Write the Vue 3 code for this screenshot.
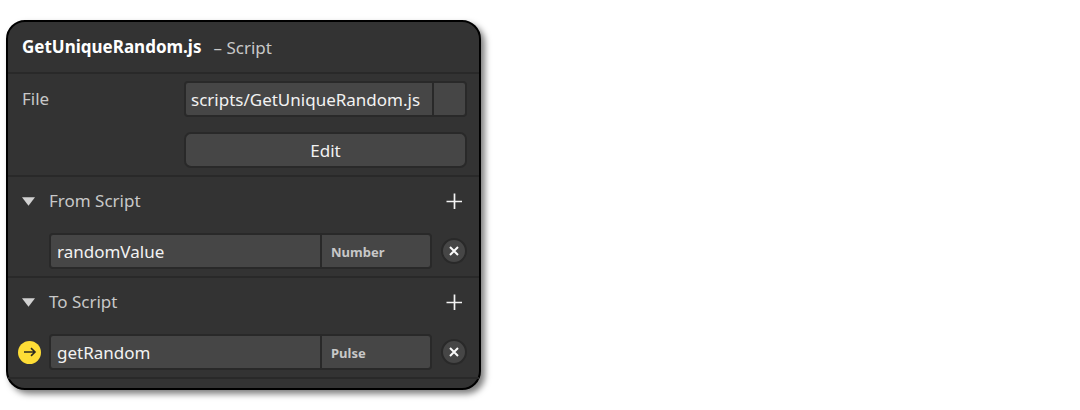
<script setup>
import { reactive, ref } from 'vue'

const file = ref('scripts/GetUniqueRandom.js')
const sections = reactive([
  { id: 'from', title: 'From Script', name: 'randomValue', type: 'Number', pulse: false, open: true },
  { id: 'to', title: 'To Script', name: 'getRandom', type: 'Pulse', pulse: true, open: true },
])
</script>

<template>
  <main class="panel">
    <header class="head">
      <h1 class="title">GetUniqueRandom.js</h1>
      <span class="kind">– Script</span>
    </header>

    <section class="block file-block">
      <label class="label" for="file">File</label>
      <div class="field">
        <input id="file" v-model="file" class="text path" type="text" />
        <button class="browse" type="button" aria-label="Browse"></button>
      </div>
      <button class="edit" type="button">Edit</button>
    </section>

    <section v-for="s in sections" :key="s.id" class="block">
      <div class="bar">
        <button class="toggle" type="button" :aria-expanded="s.open" @click="s.open = !s.open">
          <svg class="arrow" viewBox="0 0 14 9"><path d="M0 0H14L7 9Z" fill="#d2d2d2" /></svg>
          <span>{{ s.title }}</span>
        </button>
        <button class="add" type="button" :aria-label="'Add ' + s.title">
          <svg width="16" height="16" viewBox="0 0 16 16"><path d="M8.5 0.5V16M0.5 8.5H16" stroke="#f4f4f4" stroke-width="1.7" /></svg>
        </button>
      </div>
      <div v-if="s.open" class="row">
        <div class="marker">
          <button v-if="s.pulse" class="pulse" type="button" aria-label="Pulse">
            <svg width="14" height="12" viewBox="0 0 14 12"><path d="M1 6H12M8 2.2L12 6L8 9.8" fill="none" stroke="#2b2a20" stroke-width="1.6" /></svg>
          </button>
        </div>
        <div class="field">
          <input v-model="s.name" class="text" type="text" :aria-label="s.title + ' name'" />
          <button class="type" type="button">{{ s.type }}</button>
        </div>
        <button class="remove" type="button" :aria-label="'Remove ' + s.name">
          <svg width="10" height="10" viewBox="0 0 10 10"><path d="M1 1L9 9M9 1L1 9" stroke="#fafafa" stroke-width="2" /></svg>
        </button>
      </div>
    </section>
  </main>
</template>

<style>
body {
  background: #fff;
}
</style>

<style scoped>
.panel,
.panel * {
  box-sizing: border-box;
}
.panel {
  max-width: 475px;
  margin: 20px 6px;
  padding-bottom: 9px;
  border: 2px solid #000;
  border-radius: 19px;
  background: #333;
  box-shadow: 4px 4px 6px rgba(0, 0, 0, 0.5);
  color: #c8c8c8;
  font: 17px/24px "Noto Sans", "Open Sans", sans-serif;
}
button,
input {
  margin: 0;
  padding: 0;
  border: 0;
  background: none;
  color: inherit;
  font: inherit;
}
svg {
  display: block;
}
.head {
  display: flex;
  align-items: center;
  gap: 12px;
  height: 52px;
  padding: 0 14px;
  border-bottom: 2px solid #292929;
}
.title {
  margin: 0;
  color: #fff;
  font-size: 17px;
  font-weight: 700;
}
.kind {
  padding-top: 2px;
}
.block {
  padding: 0 12px 7px 14px;
  border-bottom: 2px solid #292929;
}
.file-block {
  display: grid;
  grid-template-columns: 162px 1fr;
  row-gap: 15px;
  padding-top: 7px;
}
.label {
  line-height: 36px;
}
.field {
  display: flex;
  flex: 1;
  min-width: 0;
  height: 36px;
  border: 2px solid #292929;
  border-radius: 4px;
  background: #464646;
}
.text {
  flex: 1;
  min-width: 0;
  padding: 2px 6px 0;
  color: #f2f2f2;
}
.path {
  padding: 2px 5px 0;
}
.browse {
  width: 33px;
  border-left: 2px solid #292929;
}
.edit {
  grid-column: 2;
  height: 36px;
  padding-top: 2px;
  border: 2px solid #292929;
  border-radius: 7px;
  background: #464646;
  color: #f2f2f2;
}
.bar {
  display: flex;
  align-items: center;
  justify-content: space-between;
  height: 48px;
  margin-bottom: 8px;
}
.toggle {
  display: flex;
  align-items: center;
  gap: 14px;
}
.arrow {
  width: 13px;
  height: 9px;
}
.add {
  display: grid;
  place-items: center;
  width: 26px;
  height: 26px;
}
.row {
  display: flex;
  align-items: center;
}
.marker {
  width: 27px;
}
.pulse {
  display: grid;
  place-items: center;
  width: 23px;
  height: 23px;
  margin-left: -4px;
  border-radius: 50%;
  background: #fedd36;
}
.type {
  width: 110px;
  padding: 2px 0 0 9px;
  border-left: 2px solid #292929;
  font-size: 13px;
  font-weight: 700;
  text-align: left;
}
.remove {
  display: grid;
  place-items: center;
  width: 26px;
  height: 26px;
  margin-left: 9px;
  border: 2px solid #292929;
  border-radius: 50%;
  background: #464646;
}
</style>
